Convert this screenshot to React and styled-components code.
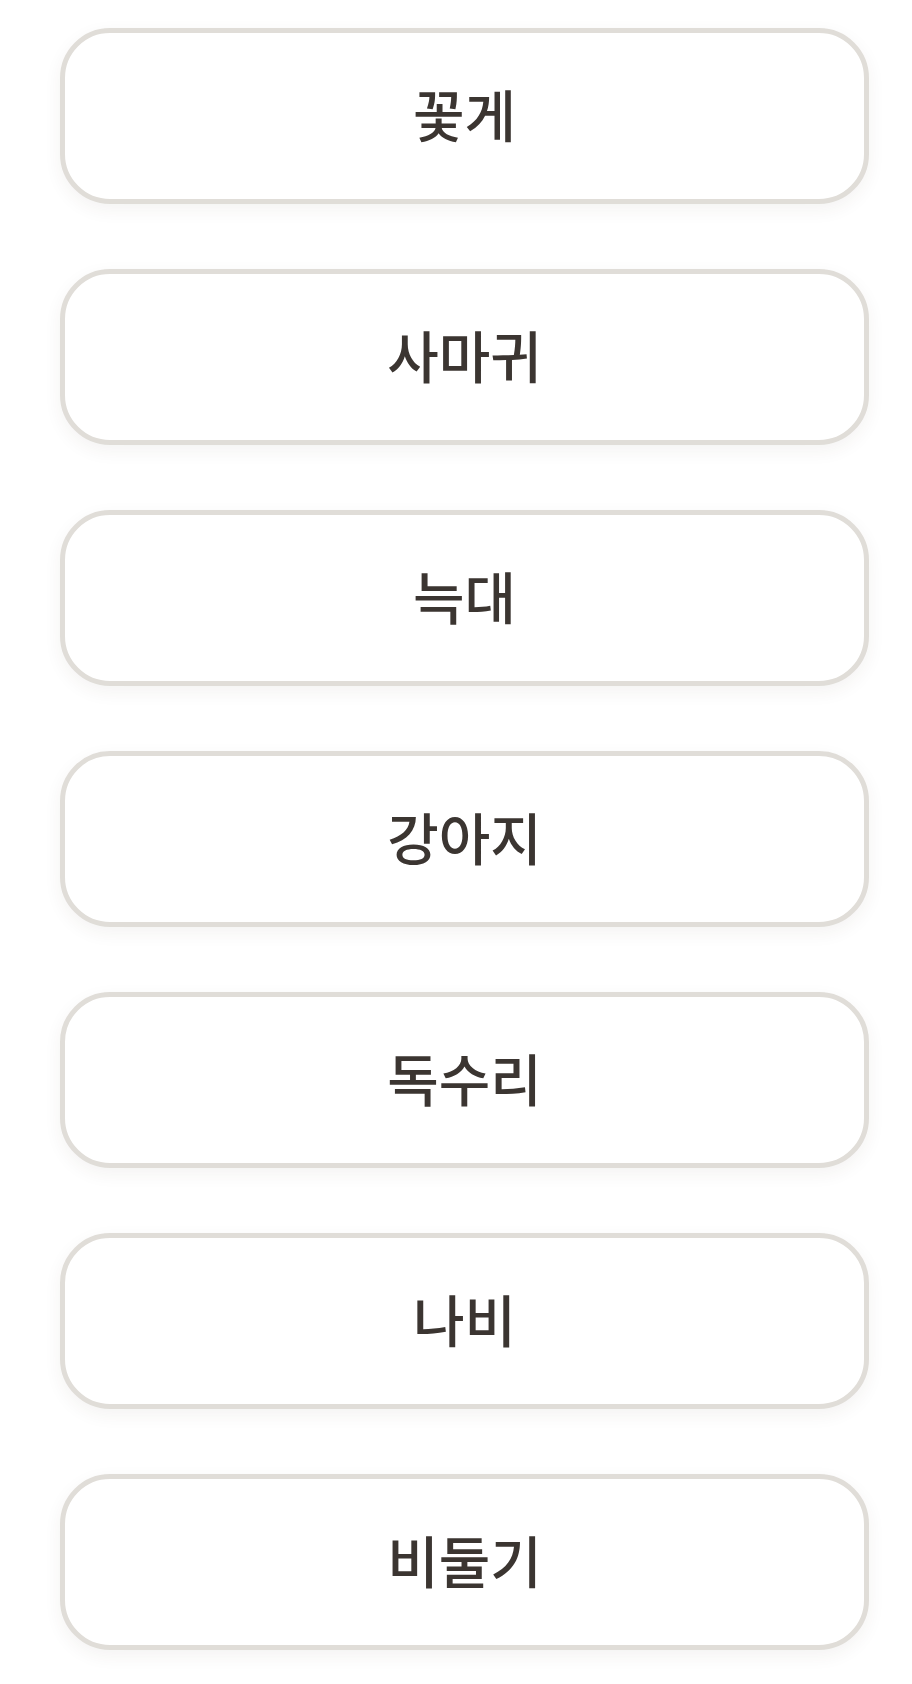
import React from "react";
import styled, { createGlobalStyle } from "styled-components";

const Global = createGlobalStyle`
  html, body {
    margin: 0;
    padding: 0;
    background: #ffffff;
  }
  body {
    font-family: "Noto Sans CJK KR", "Noto Sans", sans-serif;
  }
`;

const List = styled.div`
  display: flex;
  flex-direction: column;
  gap: 65px;
  padding: 28px 43px 34px 60px;
`;

const Choice = styled.button`
  height: 176px;
  width: 100%;
  box-sizing: border-box;
  border: 5px solid #e0ddd8;
  border-radius: 50px;
  background: #ffffff;
  box-shadow: 0 6px 18px rgba(60, 50, 40, 0.06);
  display: flex;
  align-items: center;
  justify-content: center;
  font-family: "Noto Sans CJK KR", "Noto Sans", sans-serif;
  font-size: 56px;
  font-weight: 500;
  color: #3b3531;
  cursor: pointer;
  padding: 0 0 8px;
`;

const words = ["꽃게", "사마귀", "늑대", "강아지", "독수리", "나비", "비둘기"];

export default function App() {
  return (
    <>
      <Global />
      <List>
        {words.map((w) => (
          <Choice key={w}>{w}</Choice>
        ))}
      </List>
    </>
  );
}
